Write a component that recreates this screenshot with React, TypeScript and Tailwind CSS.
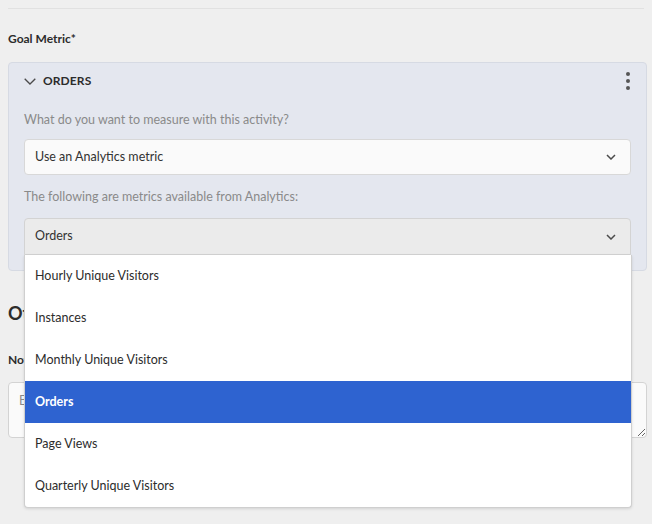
const metrics = [
  "Hourly Unique Visitors",
  "Instances",
  "Monthly Unique Visitors",
  "Orders",
  "Page Views",
  "Quarterly Unique Visitors",
];

function Caret() {
  return (
    <svg width="10" height="6" viewBox="0 0 10 6" className="text-[#4b4b4b]">
      <path d="M1 1l4 4 4-4" fill="none" stroke="currentColor" strokeWidth="1.5" />
    </svg>
  );
}

export default function App() {
  const selected = "Orders";

  return (
    <div className="min-h-screen bg-[#efefef] pl-2 pr-[5px] pt-2 font-['Lato',sans-serif] text-[12.5px] text-[#323232]">
      <div className="mr-[3px] border-t border-[#e1e1e1]" />

      <div className="mt-[21px] h-[18px] text-[12px] font-bold leading-[18px] text-[#2c2c2c]">Goal Metric*</div>

      <div className="mt-[14px] rounded border border-[#d6dae3] bg-[#e4e7ef] px-[15px] pb-[15px]">
        <div className="flex h-[36px] items-center">
          <svg width="12" height="7" viewBox="0 0 12 7" className="text-[#4b4b4b]">
            <path d="M0.7 0.7l5.3 5.3 5.3-5.3" fill="none" stroke="currentColor" strokeWidth="1.3" />
          </svg>
          <span className="ml-[7px] text-[12px] font-bold tracking-[0.1px] text-[#2c2c2c]">ORDERS</span>
          <div className="ml-auto flex flex-col gap-[3px] pr-[1px]">
            <span className="h-[4px] w-[4px] rounded-full bg-[#555]" />
            <span className="h-[4px] w-[4px] rounded-full bg-[#555]" />
            <span className="h-[4px] w-[4px] rounded-full bg-[#555]" />
          </div>
        </div>

        <div className="mt-[12px] h-[18px] leading-[18px] text-[#8a8a8a]">What do you want to measure with this activity?</div>

        <div className="mt-[10px] flex h-[36px] items-center rounded border border-[#d8d8d8] bg-[#fafafa] pl-[10px] pr-[14px]">
          <span>Use an Analytics metric</span>
          <span className="ml-auto"><Caret /></span>
        </div>

        <div className="mt-[13px] h-[18px] leading-[18px] text-[#8a8a8a]">The following are metrics available from Analytics:</div>

        <div className="relative mt-[12px]">
          <div className="flex h-[37px] items-center rounded-t border border-[#d3d3d3] bg-[#ebebeb] pl-[10px] pr-[14px]">
            <span>{selected}</span>
            <span className="ml-auto"><Caret /></span>
          </div>
          <ul className="absolute left-0 right-[-1px] top-full z-10 overflow-hidden rounded-b border border-t-0 border-[#cfcfcf] bg-white shadow-[0_1px_3px_rgba(0,0,0,0.12)]">
            {metrics.map((m) => (
              <li
                key={m}
                className={
                  m === selected
                    ? "flex h-[42px] items-center bg-[#2e63d0] pl-[10px] font-bold text-white"
                    : "flex h-[42px] items-center pl-[10px] text-[#2c2c2c]"
                }
              >
                {m}
              </li>
            ))}
          </ul>
        </div>
      </div>

      <div className="mt-[30px] h-[24px] text-[18px] font-bold leading-[24px] text-[#2c2c2c]">Other Settings</div>

      <div className="mt-[26px] h-[18px] text-[12px] font-bold leading-[18px] text-[#2c2c2c]">Notes</div>

      <textarea
        className="mt-[13px] block h-[56px] w-full rounded-sm border border-[#d3d3d3] bg-[#fafafa] px-[10px] py-[9px] text-[12.5px] outline-none placeholder:text-[#8a8a8a]"
        placeholder="Enter notes"
      />
    </div>
  );
}
